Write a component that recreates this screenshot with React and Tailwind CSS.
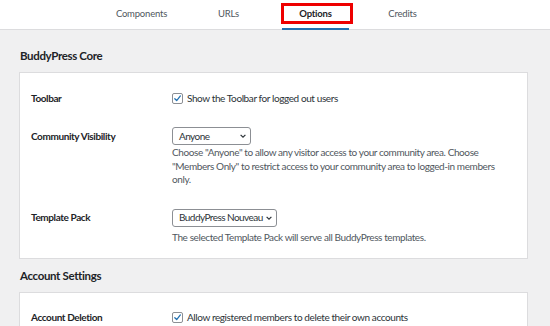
import React from "react";

function Checkbox() {
  return (
    <span className="flex h-[11px] w-[11px] shrink-0 items-center justify-center rounded-[2px] border border-[#8c8f94] bg-white">
      <svg viewBox="0 0 10 10" className="h-[9px] w-[9px]">
        <path d="M2 5.2 L4.1 7.3 L8.2 2.2" fill="none" stroke="#2271b1" strokeWidth="1.4" strokeLinecap="round" strokeLinejoin="round" />
      </svg>
    </span>
  );
}

function Select({ label, width }) {
  return (
    <div className={`flex h-[18px] ${width} items-center justify-between gap-[2px] whitespace-nowrap rounded-[3px] border border-[#8c8f94] bg-white pl-[6px] pr-[3px] text-[10px] tracking-[-0.55px] text-[#2c3338]`}>
      <span>{label}</span>
      <svg viewBox="0 0 10 10" className="h-[8px] w-[8px] shrink-0">
        <path d="M2 3.5 L5 6.5 L8 3.5" fill="none" stroke="#2c3338" strokeWidth="1.5" />
      </svg>
    </div>
  );
}

const tabs = ["Components", "URLs", "Options", "Credits"];

export default function App() {
  return (
    <div className="h-[326px] w-[550px] overflow-hidden bg-[#f0f0f1]" style={{ fontFamily: 'Lato, "Noto Sans", sans-serif' }}>
      <div className="flex h-[30px] border-b border-[#dcdcde] bg-white pl-[98px]">
        {tabs.map((t) => (
          <div key={t} className="relative flex w-[87px] items-center justify-center">
            <span className={t === "Options" ? "text-[9.5px] font-bold tracking-[-0.2px] text-[#1d2327]" : "text-[9.5px] tracking-[-0.2px] text-[#50575e]"}>{t}</span>
            {t === "Options" && (
              <>
                <span className="absolute bottom-[-1px] left-[10px] h-[2px] w-[67px] bg-[#2271b1]" />
                <span className="absolute left-[9px] top-[3px] h-[21px] w-[72px] border-[3px] border-[#ee0000]" />
              </>
            )}
          </div>
        ))}
      </div>

      <div className="pl-[19px] pr-[22px]">
        <h2 className="ml-[1px] mt-[18px] text-[11.5px] font-bold leading-[16px] tracking-[-0.35px] text-[#1d2327]">BuddyPress Core</h2>
        <div className="mt-[8px] border border-[#dcdcde] bg-white px-[11px] pb-[14px] pt-[15px]">
          <div className="flex h-[20px] items-center">
            <div className="w-[141px] text-[10px] font-bold tracking-[-0.4px] text-[#1d2327]">Toolbar</div>
            <div className="flex items-center gap-[4px] text-[10px] tracking-[-0.4px] text-[#2c3338]">
              <Checkbox />
              <span>Show the Toolbar for logged out users</span>
            </div>
          </div>
          <div className="mt-[19px] flex items-start">
            <div className="flex h-[18px] w-[141px] items-center text-[10px] font-bold tracking-[-0.4px] text-[#1d2327]">Community Visibility</div>
            <div>
              <Select label="Anyone" width="w-[79px]" />
              <p className="mt-[1px] w-[326px] text-[10px] leading-[13.5px] tracking-[-0.4px] text-[#50575e]">
                Choose "Anyone" to allow any visitor access to your community area. Choose "Members Only" to restrict access to your community area to logged-in members only.
              </p>
            </div>
          </div>
          <div className="mt-[22px] flex items-start">
            <div className="flex h-[18px] w-[141px] items-center text-[10px] font-bold tracking-[-0.4px] text-[#1d2327]">Template Pack</div>
            <div>
              <Select label="BuddyPress Nouveau" width="w-[105px]" />
              <p className="mt-[4px] text-[10px] leading-[13.5px] tracking-[-0.4px] text-[#50575e]">
                The selected Template Pack will serve all BuddyPress templates.
              </p>
            </div>
          </div>
        </div>

        <h2 className="ml-[1px] mt-[9px] text-[11.5px] font-bold leading-[16px] tracking-[-0.35px] text-[#1d2327]">Account Settings</h2>
        <div className="mt-[8px] border border-[#dcdcde] bg-white px-[11px] pt-[14px] pb-[14px]">
          <div className="flex h-[20px] items-center">
            <div className="w-[141px] text-[10px] font-bold tracking-[-0.4px] text-[#1d2327]">Account Deletion</div>
            <div className="flex items-center gap-[4px] text-[10px] tracking-[-0.4px] text-[#2c3338]">
              <Checkbox />
              <span>Allow registered members to delete their own accounts</span>
            </div>
          </div>
        </div>
      </div>
    </div>
  );
}
